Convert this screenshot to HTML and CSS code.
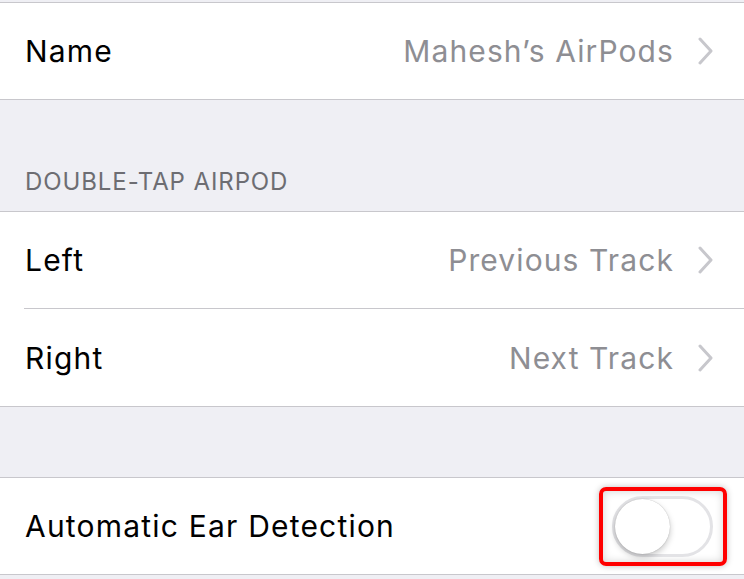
FILE: index.html
```
<!DOCTYPE html>
<html lang="en">
<head>
    <meta charset="UTF-8">
    <title>AirPods</title>
    <link rel="stylesheet" href="styles.css">
</head>
<body>
<div class="gap gap-top"></div>
<div class="group">
    <div class="row">
        <span class="label">Name</span>
        <span class="value">Mahesh’s AirPods</span>
        <svg class="chevron" viewBox="0 0 15 28"><path d="M2 2 L13 14 L2 26"/></svg>
    </div>
</div>

<div class="gap gap-header">
    <div class="header">DOUBLE-TAP AIRPOD</div>
</div>
<div class="group">
    <div class="row">
        <span class="label">Left</span>
        <span class="value">Previous Track</span>
        <svg class="chevron" viewBox="0 0 15 28"><path d="M2 2 L13 14 L2 26"/></svg>
    </div>
    <div class="row">
        <span class="label">Right</span>
        <span class="value">Next Track</span>
        <svg class="chevron" viewBox="0 0 15 28"><path d="M2 2 L13 14 L2 26"/></svg>
    </div>
</div>

<div class="gap gap-mid"></div>
<div class="group">
    <div class="row row-switch">
        <span class="label">Automatic Ear Detection</span>
        <span class="highlight">
            <span class="switch"><span class="knob"></span></span>
        </span>
    </div>
</div>
<div class="gap"></div>
</body>
</html>
```

FILE: styles.css
```
body {
    margin: 0;
    background: #efeff4;
    font-family: "Inter", "Roboto", sans-serif;
    -webkit-font-smoothing: antialiased;
}

.gap {
    height: 10px;
}

.gap-top {
    height: 2px;
}

.gap-header {
    height: 111px;
    display: flex;
    align-items: flex-end;
}

.gap-mid {
    height: 70px;
}

.header {
    padding: 0 0 15px 25px;
    font-size: 24px;
    color: #6d6d72;
    letter-spacing: 0.9px;
}

.group {
    background: #fff;
    border-top: 1px solid #c8c7cc;
    border-bottom: 1px solid #c8c7cc;
}

.row {
    height: 96px;
    display: flex;
    align-items: center;
    padding: 0 31px 0 25px;
}

.row + .row {
    height: 97px;
    border-top: 1px solid #c8c7cc;
    margin-left: 24px;
    padding-left: 1px;
}

.label {
    flex: 1;
    font-size: 30px;
    letter-spacing: 1.2px;
    color: #000;
}

.value {
    font-size: 30px;
    letter-spacing: 1.1px;
    color: #8e8e93;
}

.chevron {
    width: 15px;
    height: 28px;
    margin-left: 24px;
}

.chevron path {
    fill: none;
    stroke: #c7c7cc;
    stroke-width: 3;
    stroke-linecap: round;
    stroke-linejoin: round;
}

.row-switch {
    padding-right: 17px;
}

.highlight {
    display: flex;
    padding: 5px 10px 5px 9px;
    border: 4px solid #ff0000;
    border-radius: 7px;
    box-shadow: 0 0 6px rgba(0, 0, 0, 0.25), inset 0 0 8px rgba(0, 0, 0, 0.18);
}

.switch {
    width: 101px;
    height: 61px;
    box-sizing: border-box;
    border: 3px solid #e3e3e6;
    border-radius: 31px;
    background: #fff;
    display: flex;
    align-items: center;
}

.knob {
    width: 55px;
    height: 55px;
    border-radius: 50%;
    background: #fff;
    box-shadow: 0 3px 6px rgba(0, 0, 0, 0.22), 0 0 1px rgba(0, 0, 0, 0.3);
}
```
